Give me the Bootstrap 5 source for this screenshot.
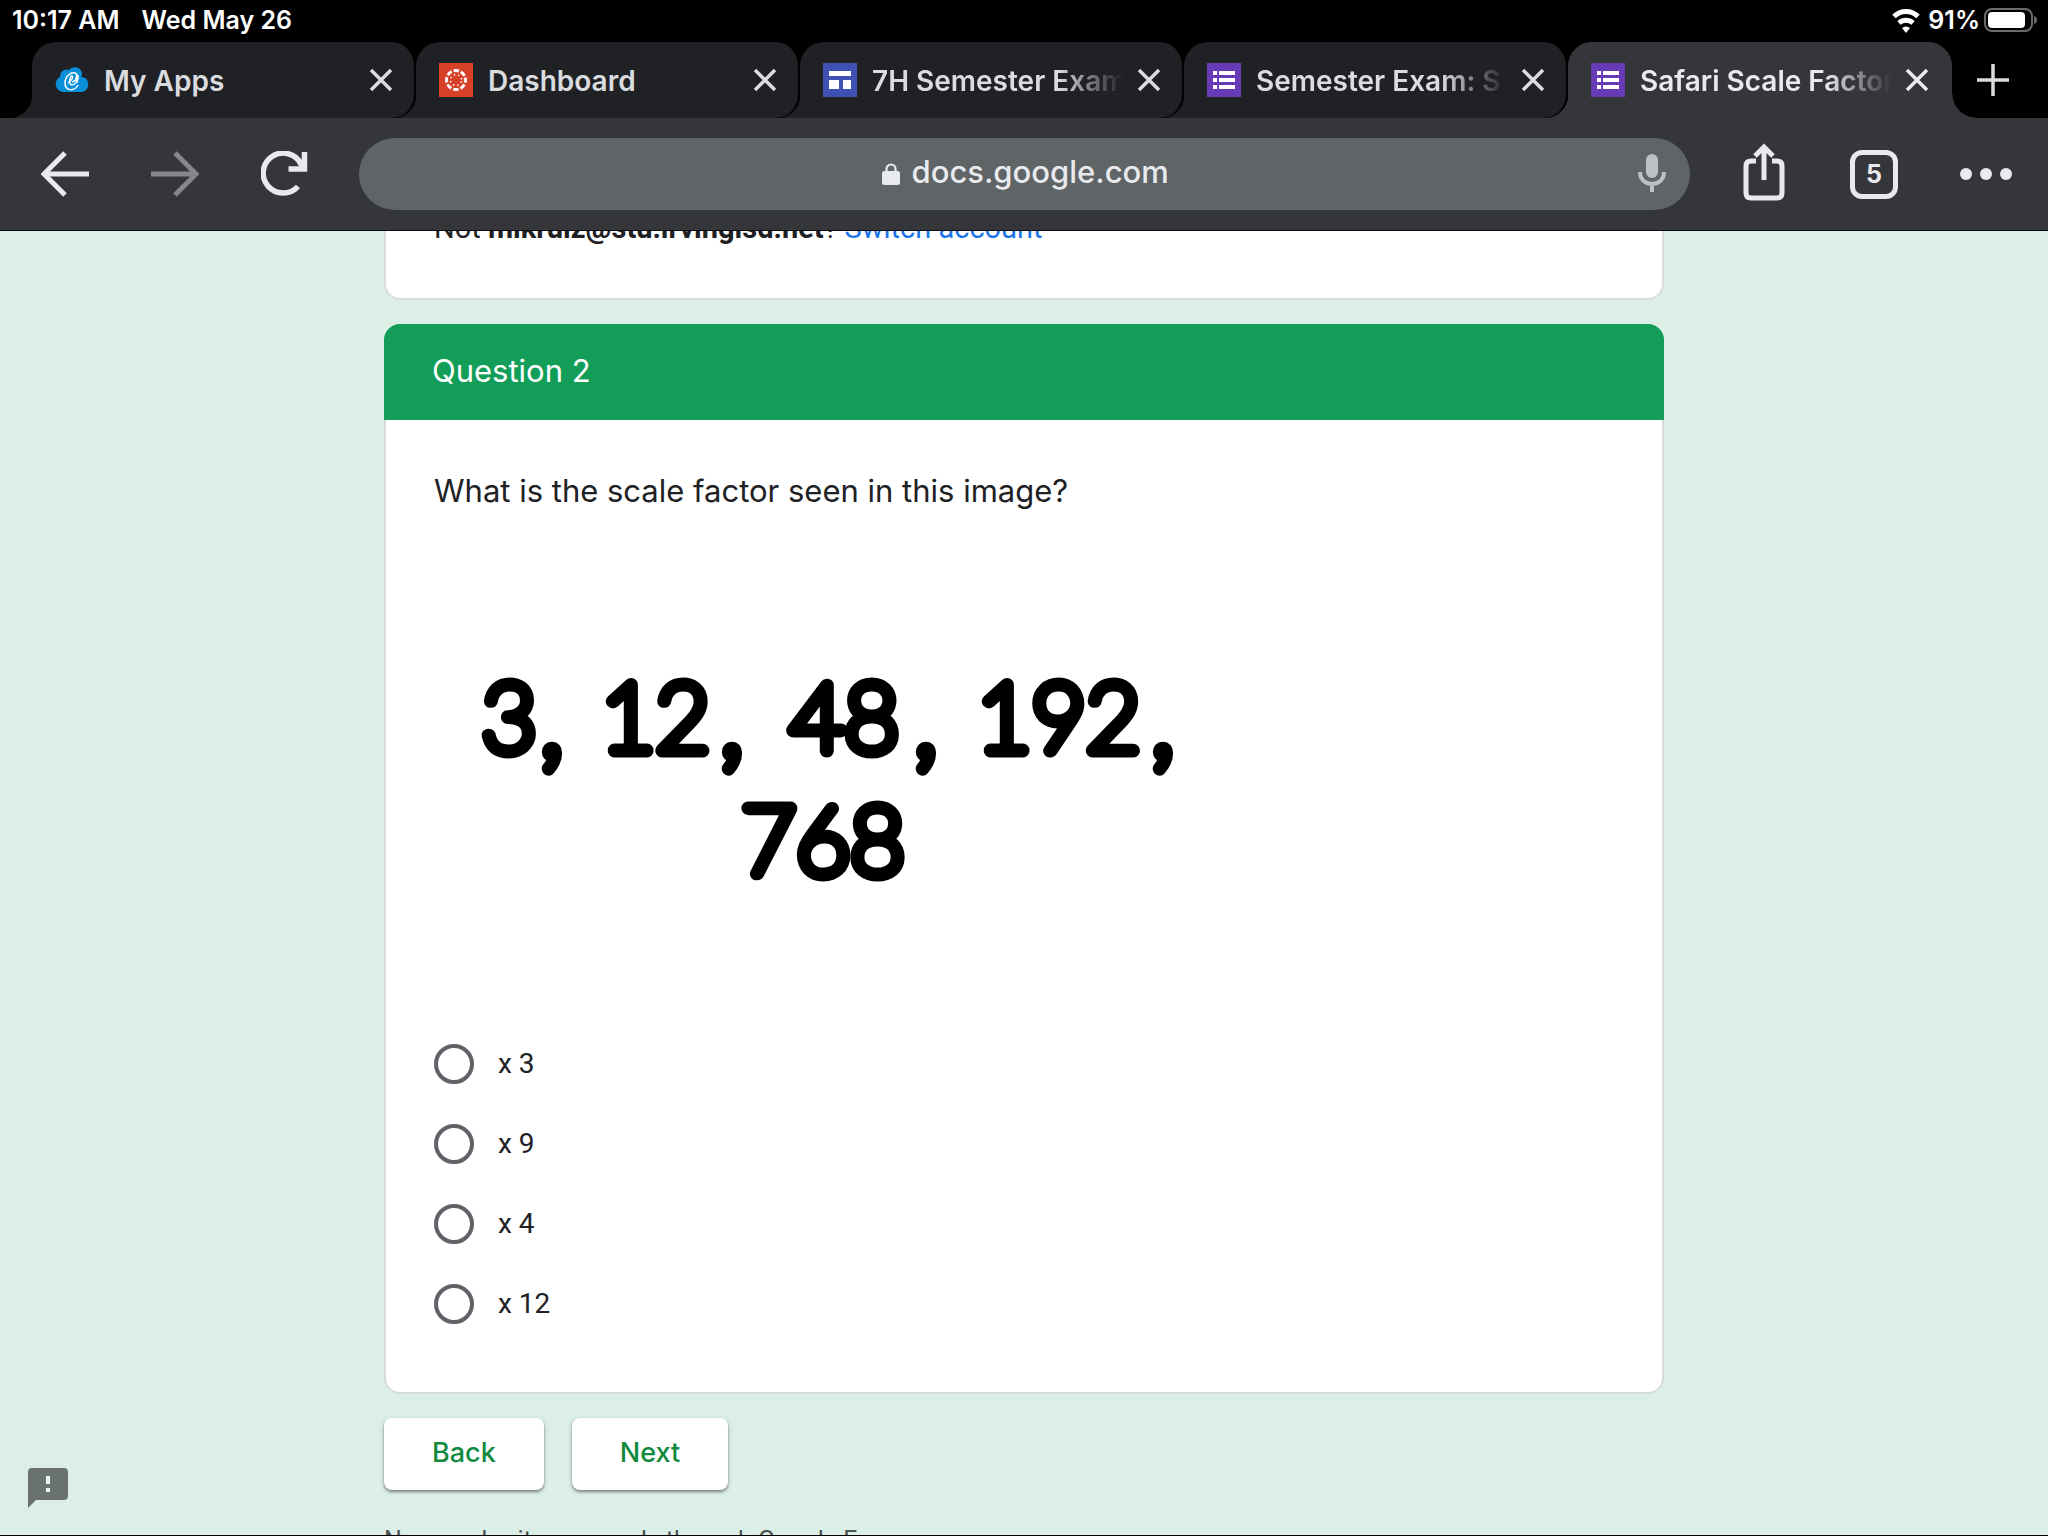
<!DOCTYPE html>
<html lang="en">
<head>
<meta charset="utf-8">
<meta name="viewport" content="width=device-width, initial-scale=1">
<title>Safari Scale Factor</title>
<link href="https://cdn.jsdelivr.net/npm/bootstrap@5.3.0/dist/css/bootstrap.min.css" rel="stylesheet">
<style>
  body { font-family: Roboto, sans-serif; background: #dbefe6; color: #202124; }
  .ui-font { font-family: Inter, sans-serif; }
  svg { display: block; flex-shrink: 0; }

  /* status bar */
  .status-bar { background: #000; color: #fff; height: 42px; padding: 0 10px 2px 12px; font-size: 25px; font-weight: 600; line-height: 28px; }
  .clock { gap: 22px; }

  /* tab strip */
  .tab-strip { background: #000; height: 76px; padding-left: 32px; }
  .browser-tab { --tab: #202124; background: var(--tab); border-right: 2px solid #000; border-radius: 24px 24px 24px 0; flex: 1 1 0; min-width: 0; padding: 0 21px 0 23px; position: relative; color: #dadce0; }
  .browser-tab::before, .browser-tab.current::after { content: ""; position: absolute; bottom: 0; width: 24px; height: 24px; }
  .browser-tab::before { left: -24px; background: radial-gradient(circle at 0 0, transparent 24px, var(--tab) 25px); }
  .browser-tab.current { --tab: #35363a; color: #e8eaed; border-radius: 24px 24px 0 0; border-color: var(--tab); }
  .browser-tab.current::after { right: -26px; background: radial-gradient(circle at 100% 0, transparent 23px, var(--tab) 24px); }
  .tab-title { color: inherit; text-decoration: none; font-size: 28px; font-weight: 600; line-height: 36px; padding-top: 2px; margin-left: 15px; overflow: hidden; white-space: nowrap; flex: 1 1 0; }
  .tab-title.faded { -webkit-mask-image: linear-gradient(90deg, #000 74%, transparent); mask-image: linear-gradient(90deg, #000 74%, transparent); }
  .plain-btn { background: none; border: 0; padding: 0; color: inherit; }
  .tab-close { margin-left: 14px; }
  .new-tab { width: 82px; margin-right: 14px; color: #dadce0; z-index: 1; }

  /* toolbar */
  .toolbar { background: #35363a; border-bottom: 1px solid #0c0d0e; height: 113px; padding: 0 36px 0 41px; color: #e8eaed; gap: 50px; }
  .tool-group { gap: 62px; }
  .address { background: #5f6467; border-radius: 36px; height: 72px; gap: 12px; position: relative; }
  .address input { background: none; border: 0; outline: 0; padding: 0 0 4px; width: 256px; font-size: 31px; font-weight: 500; line-height: 40px; color: #e8eaed; }
  .mic { position: absolute; right: 24px; top: 16px; color: #bdc1c6; }
  .tab-count { width: 48px; height: 49px; border: 5px solid #e8eaed; border-radius: 12px; font-size: 25px; font-weight: 700; line-height: 36px; }

  /* form */
  .viewport-area { border-bottom: 1px solid #000; min-height: 0; }
  .form-column { max-width: 1280px; margin-top: -28px; }
  .form-card { border: 2px solid #d6ddd9; border-radius: 16px; background: #fff; }
  .account-line { font-size: 29px; line-height: 40px; padding: 5px 48px 50px; border-top: 0; border-radius: 0 0 16px 16px; }
  .account-line a { color: #1a73e8; text-decoration: none; }
  .section-title { background: #129e58; color: #fff; font-size: 31px; line-height: 40px; font-weight: 400; margin: -2px -2px 0; padding: 27px 48px 29px; border-radius: 16px 16px 0 0; }
  .question { font-size: 31px; line-height: 40px; font-weight: 400; }
  .question-body { padding: 51px 48px 48px; }
  .figure-art { width: 780px; max-width: 100%; height: auto; margin: 41px 0; }
  .figure-art text { font-family: Lato, sans-serif; font-weight: 200; fill: #000; stroke: #000; stroke-width: 13px; stroke-linejoin: round; }
  .choice { font-size: 28px; line-height: 40px; height: 80px; gap: 24px; }
  .choice input { appearance: none; width: 40px; height: 40px; margin: 0; border: 4px solid #5f6368; border-radius: 50%; background: #fff; flex-shrink: 0; }
  .choice input:checked { box-shadow: inset 0 0 0 6px #fff, inset 0 0 0 20px #129e58; }
  .form-btn { background: #fff; color: #128a3e; border: 0; border-radius: 8px; height: 72px; padding: 0 48px 2px; font-size: 27px; line-height: 40px; font-weight: 500; box-shadow: 0 2px 3px rgba(0,0,0,.4), 0 1px 6px rgba(0,0,0,.1); }
  .form-actions { gap: 28px; }
  .footnote { font-size: 25px; line-height: 32px; color: #4b5350; margin-top: 35px; }
  .report { position: absolute; left: 28px; bottom: 27px; color: #69726e; }
</style>
</head>
<body>
<div class="d-flex flex-column vh-100 overflow-hidden">

  <div class="status-bar ui-font d-flex flex-shrink-0 align-items-center justify-content-between">
    <div class="clock d-flex"><span>10:17 AM</span><span>Wed May 26</span></div>
    <div class="d-flex align-items-center">
      <svg class="me-2" width="28" height="26" viewBox="0 0 28 26" fill="none" stroke="#fff" stroke-width="5"><path d="M2 9.500a17 17 0 0 1 24 0M7 16a10.500 10.500 0 0 1 14 0"/><path d="M14 26l-4-5a6 6 0 0 1 8 0z" fill="#fff" stroke="none"/></svg>
      <span class="me-1">91%</span>
      <svg width="54" height="24" viewBox="0 0 54 24"><rect x="1" y="1" width="47" height="22" rx="7" fill="none" stroke="#6b6b6b" stroke-width="2"/><rect x="4" y="4" width="37" height="16" rx="4" fill="#fff"/><path d="M50 8c4 1 4 7 0 8z" fill="#6b6b6b"/></svg>
    </div>
  </div>

  <nav class="tab-strip ui-font d-flex flex-shrink-0" aria-label="Open tabs">
    <div class="browser-tab d-flex align-items-center">
      <svg width="34" height="34" viewBox="0 0 34 34"><path d="M8 29a8 8 0 0 1-3-15c0-6 5-9 9-7 4-5 13-3 13 4 0 1 0 2-1 3 9-1 10 14 1 15z" fill="#0a8ed9"/><g fill="none" stroke="#fff" stroke-width="1.500"><path d="M23 22c-4 7-13 6-13-2 0-7 6-11 10-10 4 2 2 8-3 9"/><path d="M13 20c3-2 6-6 4-7s-4 9 0 9 7-7 6-9-4 4 0 6"/></g></svg>
      <a class="tab-title" href="#">My Apps</a>
      <button class="plain-btn tab-close" aria-label="Close My Apps"><svg width="24" height="24" viewBox="0 0 24 24" stroke="currentColor" stroke-width="3.500"><path d="M2 2l20 20M22 2L2 22"/></svg></button>
    </div>
    <div class="browser-tab d-flex align-items-center">
      <svg width="34" height="34" viewBox="0 0 34 34"><path d="M0 0h34v34H0z" fill="#d64027"/><circle cx="17" cy="17" r="9.500" fill="none" stroke="#fff" stroke-width="3" stroke-dasharray="5.500 1.960" stroke-dashoffset="2.750"/><circle cx="17" cy="17" r="5.500" fill="none" stroke="#fff" stroke-width="1.500" stroke-dasharray="1.500 2.820" stroke-dashoffset="-1.400"/></svg>
      <a class="tab-title" href="#">Dashboard</a>
      <button class="plain-btn tab-close" aria-label="Close Dashboard"><svg width="24" height="24" viewBox="0 0 24 24" stroke="currentColor" stroke-width="3.500"><path d="M2 2l20 20M22 2L2 22"/></svg></button>
    </div>
    <div class="browser-tab d-flex align-items-center">
      <svg width="34" height="34" viewBox="0 0 34 34"><path d="M0 0h34v34H0z" fill="#3f51b5"/><path d="M6 8h22v5H6zM6 17h10v9H6zM20 17h8v9h-8z" fill="#fff"/></svg>
      <a class="tab-title faded" href="#">7H Semester Exam</a>
      <button class="plain-btn tab-close" aria-label="Close 7H Semester Exam"><svg width="24" height="24" viewBox="0 0 24 24" stroke="currentColor" stroke-width="3.500"><path d="M2 2l20 20M22 2L2 22"/></svg></button>
    </div>
    <div class="browser-tab d-flex align-items-center">
      <svg width="34" height="34" viewBox="0 0 34 34"><path d="M0 0h34v34H0z" fill="#673ab7"/><path d="M6 8h4v4H6zM12 8h16v4H12zM6 15h4v4H6zM12 15h16v4H12zM6 22h4v4H6zM12 22h16v4H12z" fill="#fff"/></svg>
      <a class="tab-title faded" href="#">Semester Exam: S</a>
      <button class="plain-btn tab-close" aria-label="Close Semester Exam"><svg width="24" height="24" viewBox="0 0 24 24" stroke="currentColor" stroke-width="3.500"><path d="M2 2l20 20M22 2L2 22"/></svg></button>
    </div>
    <div class="browser-tab current d-flex align-items-center">
      <svg width="34" height="34" viewBox="0 0 34 34"><path d="M0 0h34v34H0z" fill="#673ab7"/><path d="M6 8h4v4H6zM12 8h16v4H12zM6 15h4v4H6zM12 15h16v4H12zM6 22h4v4H6zM12 22h16v4H12z" fill="#fff"/></svg>
      <a class="tab-title faded" href="#" aria-current="page">Safari Scale Factor</a>
      <button class="plain-btn tab-close" aria-label="Close Safari Scale Factor"><svg width="24" height="24" viewBox="0 0 24 24" stroke="currentColor" stroke-width="3.500"><path d="M2 2l20 20M22 2L2 22"/></svg></button>
    </div>
    <button class="plain-btn new-tab d-flex align-items-center justify-content-center" aria-label="New tab"><svg width="32" height="32" viewBox="0 0 32 32" stroke="currentColor" stroke-width="3.500"><path d="M0 16h32M16 0v32"/></svg></button>
  </nav>

  <div class="toolbar ui-font d-flex flex-shrink-0 align-items-center">
    <div class="tool-group d-flex">
      <button class="plain-btn" aria-label="Back"><svg width="48" height="46" viewBox="0 0 48 46" fill="none" stroke="currentColor" stroke-width="5"><path d="M48 23H4M24 2L3 23l21 21"/></svg></button>
      <button class="plain-btn" aria-label="Forward" disabled><svg width="48" height="46" viewBox="0 0 48 46" fill="none" stroke="#85868a" stroke-width="5"><path d="M0 23h44M24 2l21 21-21 21"/></svg></button>
      <button class="plain-btn" aria-label="Reload"><svg width="48" height="46" viewBox="0 0 48 46" fill="none" stroke="currentColor" stroke-width="5.500"><path d="M37 35.500A20 20 0 1 1 40 13"/><path d="M43.500 1v17H27.500"/><path d="M34 6l9 9v3h-4z" fill="currentColor" stroke="none"/></svg></button>
    </div>
    <div class="address flex-grow-1 d-flex align-items-center justify-content-center">
      <svg width="18" height="22" viewBox="0 0 18 22"><rect y="8" width="18" height="14" rx="2.500" fill="#e8eaed"/><path d="M4.500 9V6a4.500 4.500 0 0 1 9 0v3" fill="none" stroke="#e8eaed" stroke-width="2.200"/></svg>
      <input type="text" value="docs.google.com" aria-label="Address">
      <button class="plain-btn mic" aria-label="Voice search"><svg width="28" height="38" viewBox="0 0 28 38"><rect x="8" y="0" width="12" height="24" rx="6" fill="currentColor"/><path d="M2 18c0 16 24 16 24 0M14 30v8" fill="none" stroke="currentColor" stroke-width="4"/></svg></button>
    </div>
    <div class="tool-group d-flex align-items-center">
      <button class="plain-btn" aria-label="Share"><svg width="48" height="64" viewBox="0 0 48 64" fill="none" stroke="currentColor" stroke-width="5"><path d="M16 19h-5q-5 0-5 5v27q0 5 5 5h26q5 0 5-5V24q0-5-5-5h-5M24 38V5M15 14l9-9 9 9"/></svg></button>
      <button class="plain-btn tab-count" aria-label="5 open tabs">5</button>
      <button class="plain-btn" aria-label="More"><svg width="52" height="12" viewBox="0 0 52 12" fill="currentColor"><circle cx="6" cy="6" r="6"/><circle cx="26" cy="6" r="6"/><circle cx="46" cy="6" r="6"/></svg></button>
    </div>
  </div>

  <main class="viewport-area flex-grow-1 overflow-hidden position-relative">
    <form class="form-column mx-auto" onsubmit="return false">
      <div class="form-card account-line">Not <b>mikruiz@stu.irvingisd.net</b>? <a href="#">Switch account</a></div>

      <section class="form-card mt-4">
        <h1 class="section-title ui-font">Question 2</h1>
        <div class="question-body">
          <h2 class="question ui-font mb-0" id="q2">What is the scale factor seen in this image?</h2>
          <svg class="figure-art" viewBox="0 0 780 431" role="img" aria-label="3, 12, 48, 192, 768">
            <g font-size="94">
              <text x="48" y="199">3</text><text x="167" y="199">12</text><text x="356" y="199">48</text><text x="543" y="199">192</text>
              <text x="389" y="322" text-anchor="middle">768</text>
            </g>
            <g font-size="120">
              <text x="105" y="203">,</text><text x="285" y="203">,</text><text x="479" y="203">,</text><text x="716" y="203">,</text>
            </g>
          </svg>
          <div role="radiogroup" aria-labelledby="q2">
            <label class="choice d-flex align-items-center"><input type="radio" name="factor"><span>x 3</span></label>
            <label class="choice d-flex align-items-center"><input type="radio" name="factor"><span>x 9</span></label>
            <label class="choice d-flex align-items-center"><input type="radio" name="factor"><span>x 4</span></label>
            <label class="choice d-flex align-items-center"><input type="radio" name="factor"><span>x 12</span></label>
          </div>
        </div>
      </section>

      <div class="form-actions d-flex mt-4">
        <button class="form-btn ui-font" type="button">Back</button>
        <button class="form-btn ui-font" type="submit">Next</button>
      </div>
      <p class="footnote mb-0">Never submit passwords through Google Forms.</p>
    </form>
    <button class="plain-btn report" aria-label="Report a problem"><svg width="40" height="40" viewBox="0 0 40 40"><path d="M4 0h32q4 0 4 4v24q0 4-4 4H8l-8 8V4q0-4 4-4z" fill="currentColor"/><path d="M18 8h4v8h-4zM18 20h4v4h-4z" fill="#e9f5f0"/></svg></button>
  </main>
</div>
<script src="https://cdn.jsdelivr.net/npm/bootstrap@5.3.0/dist/js/bootstrap.bundle.min.js"></script>
</body>
</html>
